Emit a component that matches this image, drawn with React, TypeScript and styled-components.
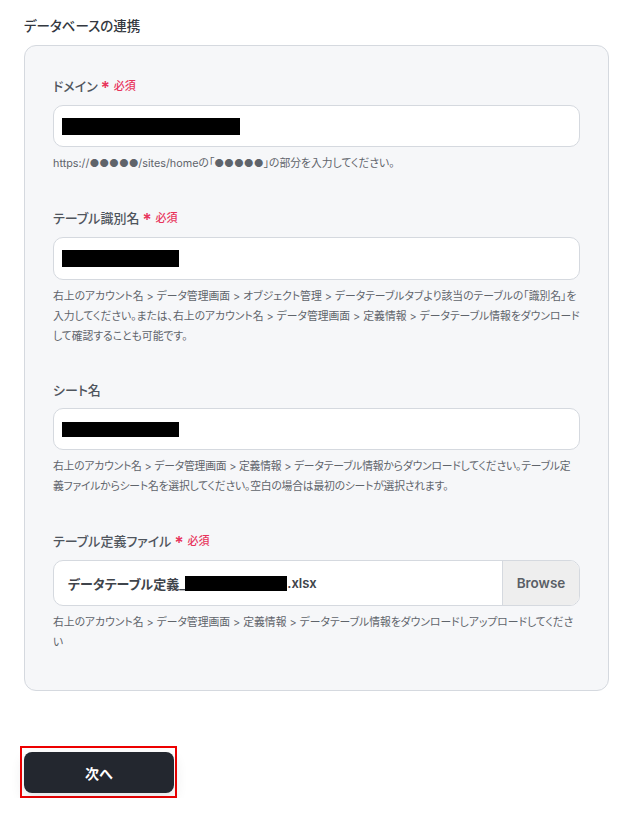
import React from "react";
import styled, { createGlobalStyle } from "styled-components";

const GlobalStyle = createGlobalStyle`
	html, body {
		margin: 0;
		padding: 0;
		background: #ffffff;
	}
	body {
		font-family: "Inter", "Noto Sans CJK JP", sans-serif;
		font-feature-settings: "palt";
		color: #333840;
	}
`;

const Page = styled.div`
	width: 630px;
	padding: 16px 21px 0 24px;
	box-sizing: border-box;
`;

const Title = styled.h2`
	margin: 0 0 9px;
	font-size: 13.5px;
	line-height: 20px;
	font-weight: 500;
	color: #333840;
`;

const Card = styled.div`
	border: 1px solid #d5d9df;
	border-radius: 12px;
	background: #f6f7f9;
	padding: 29px 28px 37px 28px;
	display: flex;
	flex-direction: column;
	gap: 33px;
`;

const Field = styled.div`
	display: flex;
	flex-direction: column;
`;

const Label = styled.div`
	display: flex;
	align-items: center;
	gap: 3px;
	font-size: 13px;
	line-height: 20px;
	font-weight: 500;
	color: #4f555d;
	margin-bottom: 8px;
`;

const Required = styled.span`
	display: inline-flex;
	align-items: center;
	gap: 4px;
	color: #e8345c;
	font-size: 11px;
	font-weight: 500;
	.mark {
		font-size: 17px;
		font-weight: 600;
		line-height: 1;
		margin-top: 5px;
	}
`;

const InputBox = styled.div<{ $height?: number }>`
	height: ${({ $height }) => $height || 42}px;
	box-sizing: border-box;
	border: 1px solid #d5d9df;
	border-radius: 10px;
	background: #ffffff;
	display: flex;
	align-items: center;
	padding-left: 8px;
	overflow: hidden;
`;

const Redact = styled.span<{ $w: number; $h?: number }>`
	display: inline-block;
	width: ${({ $w }) => $w}px;
	height: ${({ $h }) => $h || 17}px;
	background: #000000;
`;

const FileName = styled.div`
	flex: 1;
	display: flex;
	align-items: center;
	padding-left: 6px;
	font-size: 13px;
	font-weight: 600;
	color: #3f444b;
`;

const Browse = styled.div`
	width: 76px;
	height: 100%;
	display: flex;
	align-items: center;
	justify-content: center;
	background: #eeeeee;
	border-left: 1px solid #d5d9df;
	font-size: 13.5px;
	font-weight: 600;
	color: #5a5f66;
`;

const Help = styled.p<{ $tight?: boolean }>`
	margin: 7px 0 0;
	font-size: 10.8px;
	line-height: 20px;
	letter-spacing: ${({ $tight }) => ($tight ? "-0.018em" : "normal")};
	color: #5f646b;
`;

const ButtonFrame = styled.div`
	display: inline-block;
	margin-top: 55px;
	margin-left: -4px;
	border: 2px solid #ee0000;
	padding: 4px 1px 3px 2px;
`;

const NextButton = styled.button`
	width: 150px;
	height: 41px;
	border: none;
	border-radius: 8px;
	background: #23272f;
	color: #ffffff;
	font-family: "Inter", "Noto Sans CJK JP", sans-serif;
	font-size: 14px;
	font-weight: 700;
	box-shadow: 0 6px 14px rgba(35, 39, 47, 0.12);
	display: block;
	cursor: pointer;
`;

const Req = () => (
	<Required>
		<span className="mark">*</span>必須
	</Required>
);

export default function App() {
	return (
		<>
			<GlobalStyle />
			<Page>
				<Title>データベースの連携</Title>
				<Card>
					<Field>
						<Label>ドメイン<Req /></Label>
						<InputBox>
							<Redact $w={178} />
						</InputBox>
						<Help>https://●●●●●/sites/homeの「●●●●●」の部分を入力してください。</Help>
					</Field>
					<Field>
						<Label>テーブル識別名<Req /></Label>
						<InputBox $height={43}>
							<Redact $w={117} />
						</InputBox>
						<Help>
							右上のアカウント名 &gt; データ管理画面 &gt; オブジェクト管理 &gt; データテーブルタブより該当のテーブルの「識別名」を入力してください。または、右上のアカウント名 &gt; データ管理画面 &gt; 定義情報 &gt; データテーブル情報をダウンロードして確認することも可能です。
						</Help>
					</Field>
					<Field>
						<Label>シート名</Label>
						<InputBox>
							<Redact $w={117} $h={15} />
						</InputBox>
						<Help $tight>
							右上のアカウント名 &gt; データ管理画面 &gt; 定義情報 &gt; データテーブル情報からダウンロードしてください。テーブル定義ファイルからシート名を選択してください。空白の場合は最初のシートが選択されます。
						</Help>
					</Field>
					<Field>
						<Label>テーブル定義ファイル<Req /></Label>
						<InputBox $height={46}>
							<FileName>
								データテーブル定義_<Redact $w={102} $h={15} />.xlsx
							</FileName>
							<Browse>Browse</Browse>
						</InputBox>
						<Help>
							右上のアカウント名 &gt; データ管理画面 &gt; 定義情報 &gt; データテーブル情報をダウンロードしアップロードしてください
						</Help>
					</Field>
				</Card>
				<ButtonFrame>
					<NextButton>次へ</NextButton>
				</ButtonFrame>
			</Page>
		</>
	);
}
